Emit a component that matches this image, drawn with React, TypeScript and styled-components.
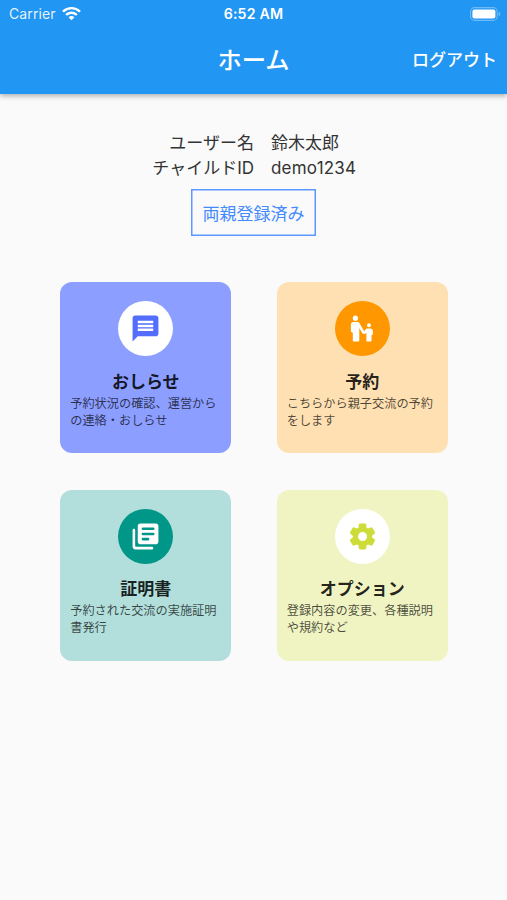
import React from "react";
import styled, { createGlobalStyle } from "styled-components";
import { MdMessage } from "react-icons/md";

const GlobalStyle = createGlobalStyle`
  * { box-sizing: border-box; }
  body {
    margin: 0;
    background: #fafafa;
    color: #333;
    font-family: Inter, "Noto Sans CJK JP", sans-serif;
  }
`;

const Screen = styled.div`
  min-height: 900px;
  display: flex;
  flex-direction: column;
`;

const Header = styled.header`
  height: 94px;
  background: #2196f3;
  color: #fff;
  box-shadow: 0 2px 5px rgba(0, 0, 0, 0.3);
`;

const StatusBar = styled.div`
  height: 27px;
  padding: 0 6px 0 9px;
  display: grid;
  grid-template-columns: 1fr auto 1fr;
  align-items: center;
`;

const Carrier = styled.div`
  display: flex;
  align-items: center;
  gap: 6px;
  font-size: 14px;
  line-height: 27px;
  letter-spacing: 0.1px;
  color: rgba(255, 255, 255, 0.9);
`;

const Clock = styled.div`
  margin-left: -3px;
  font-size: 14.2px;
  font-weight: 600;
  line-height: 27px;
  letter-spacing: 0.2px;
`;

const Battery = styled.svg`
  justify-self: end;
`;

const AppBar = styled.div`
  height: 65px;
  padding: 0 10px 0 10px;
  display: grid;
  grid-template-columns: 1fr auto 1fr;
  align-items: center;
`;

const Title = styled.h1`
  grid-column: 2;
  margin: 0;
  font-size: 24.3px;
  font-weight: 500;
  line-height: 36px;
`;

const Logout = styled.button`
  justify-self: end;
  padding: 0;
  border: 0;
  background: none;
  color: inherit;
  font: inherit;
  font-size: 17px;
  font-weight: 500;
  line-height: 26px;
`;

const Account = styled.section`
  padding-top: 37px;
  display: flex;
  flex-direction: column;
  align-items: center;
`;

const AccountTable = styled.dl`
  margin: 0;
  width: 100%;
  display: grid;
  grid-template-columns: 1fr 1fr;
  column-gap: 17px;
  padding-left: 18px;
  font-size: 17px;
  line-height: 24.5px;
`;

const Label = styled.dt`
  text-align: right;
`;

const Value = styled.dd<{ $tracking?: number }>`
  margin: 0;
  letter-spacing: ${(p) => p.$tracking ?? 0}px;
`;

const ParentsBadge = styled.div`
  margin-top: 9px;
  width: 125px;
  height: 47px;
  padding-bottom: 1px;
  display: flex;
  align-items: center;
  justify-content: center;
  box-shadow: inset 0 0 0 1.5px #5c98ff;
  color: #448aff;
  font-size: 17px;
  white-space: nowrap;
`;

const Menu = styled.main`
  margin: 46px auto 0;
  display: grid;
  grid-template-columns: 171px 171px;
  gap: 36.500px 45.500px;
  padding-left: 1px;
`;

const Card = styled.article<{ $tint: string }>`
  height: 171px;
  padding: 19px 10px 0;
  border-radius: 12px;
  background: ${(p) => p.$tint};
`;

const IconDisc = styled.div<{ $fill: string; $ink: string }>`
  width: 55px;
  height: 55px;
  margin: 0 auto;
  display: flex;
  align-items: center;
  justify-content: center;
  border-radius: 50%;
  background: ${(p) => p.$fill};
  color: ${(p) => p.$ink};
`;

const CardTitle = styled.h2`
  margin: 12.500px 0 0;
  text-align: center;
  color: rgba(0, 0, 0, 0.87);
  font-size: 17px;
  font-weight: 600;
  line-height: 26px;
`;

const CardText = styled.p`
  margin: 0 -6px 0 0;
  color: rgba(0, 0, 0, 0.7);
  font-size: 12.2px;
  line-height: 17px;
  white-space: pre-line;
`;

interface IconProps {
  size: number;
}

function ParentChildIcon({ size }: IconProps) {
  return (
    <svg width={size} height={size} viewBox="0 0 24 24" fill="currentColor">
      <circle cx="6.5" cy="4" r="2" />
      <circle cx="17" cy="9.5" r="1.5" />
      <path d="M5 7h3c.7 0 1.3.4 1.7 1l3.6 6.2.9-1.3c.4-.6 1-.9 1.6-.9H18c1.1 0 2 .9 2 2v2.2c0 .5-.4.8-1 .8v4.2c0 .4-.3.8-.8.8h-2.400c-.5 0-.8-.4-.8-.8V15l-.4.6c-.2.3-.4.4-.7.4h-1.300c-.3 0-.5-.1-.7-.4L9.500 11.700v9.500c0 .4-.4.8-.8.8H5.300c-.4 0-.8-.4-.8-.8V15H4c-.6 0-1-.4-1-1V9c0-1.100.9-2 2-2Z" />
    </svg>
  );
}

function LibraryIcon({ size }: IconProps) {
  return (
    <svg width={size} height={size} viewBox="0 0 24 24" fill="currentColor">
      <path d="M3 6c-.55 0-1 .45-1 1v13c0 1.100.9 2 2 2h13c.55 0 1-.45 1-1s-.45-1-1-1H5c-.55 0-1-.45-1-1V7c0-.55-.45-1-1-1Z" />
      <path
        fillRule="evenodd"
        d="M20 2H8c-1.100 0-2 .9-2 2v12c0 1.100.9 2 2 2h12c1.100 0 2-.9 2-2V4c0-1.100-.9-2-2-2ZM10 5h8a1 1 0 0 1 0 2h-8a1 1 0 0 1 0-2Zm0 4h8a1 1 0 0 1 0 2h-8a1 1 0 0 1 0-2Zm0 4h4a1 1 0 0 1 0 2h-4a1 1 0 0 1 0-2Z"
      />
    </svg>
  );
}

function GearIcon({ size }: IconProps) {
  return (
    <svg width={size} height={size} viewBox="0 0 24 24" fill="currentColor">
      <path d="M19.5 12c0-.23-.01-.45-.03-.68l1.86-1.41c.4-.3.51-.86.26-1.3l-1.87-3.23c-.25-.44-.79-.62-1.25-.42l-2.15.91c-.37-.26-.76-.49-1.17-.68l-.29-2.31c-.06-.5-.49-.88-.99-.88h-3.73c-.51 0-.94.38-1 .88l-.29 2.31c-.41.19-.8.42-1.17.68l-2.15-.91c-.46-.2-1-.02-1.25.42L2.410 8.620c-.25.44-.14.99.26 1.3l1.860 1.410c-.02.22-.03.44-.03.67s.01.45.03.68l-1.860 1.410c-.4.3-.51.86-.26 1.3l1.870 3.230c.25.44.79.62 1.250.42l2.150-.91c.37.26.76.49 1.170.68l.29 2.310c.06.5.49.88.99.88h3.730c.5 0 .93-.38.99-.88l.29-2.310c.41-.19.8-.42 1.170-.68l2.150.91c.46.2 1 .02 1.250-.42l1.870-3.230c.25-.44.14-.99-.26-1.3l-1.860-1.410c.03-.23.04-.45.04-.68Zm-7.460 3.5c-1.930 0-3.500-1.570-3.500-3.500s1.570-3.500 3.500-3.500 3.500 1.570 3.500 3.500-1.570 3.500-3.500 3.500Z" />
    </svg>
  );
}

interface MenuItem {
  title: string;
  text: string;
  tint: string;
  fill: string;
  ink: string;
  icon: React.ComponentType<IconProps>;
}

const items: MenuItem[] = [
  { title: "おしらせ", text: "予約状況の確認、運営から\nの連絡・おしらせ", tint: "#8c9eff", fill: "#ffffff", ink: "#536dfe", icon: MdMessage },
  { title: "予約", text: "こちらから親子交流の予約\nをします", tint: "#ffe0b2", fill: "#ff9800", ink: "#ffffff", icon: ParentChildIcon },
  { title: "証明書", text: "予約された交流の実施証明\n書発行", tint: "#b2dfdb", fill: "#009688", ink: "#ffffff", icon: LibraryIcon },
  { title: "オプション", text: "登録内容の変更、各種説明\nや規約など", tint: "#f0f4c3", fill: "#ffffff", ink: "#cddc39", icon: GearIcon },
];

function WifiIcon() {
  return (
    <svg width="19" height="14" viewBox="0 0 19 14" fill="#fff">
      <path d="M9.5 0C6 0 2.8 1.4.5 3.6a.4.4 0 0 0 0 .6l1.1 1.1c.2.2.4.2.6 0a10.500 10.500 0 0 1 14.600 0c.2.2.4.2.6 0l1.100-1.100a.4.4 0 0 0 0-.6A13 13 0 0 0 9.500 0Z" />
      <path d="M9.500 4.600c-2.300 0-4.300.9-5.900 2.300a.4.4 0 0 0 0 .6l1.100 1.100c.2.200.4.200.6 0a6.200 6.200 0 0 1 8.400 0c.2.200.4.200.6 0l1.100-1.100a.4.4 0 0 0 0-.6 8.700 8.700 0 0 0-5.900-2.300Z" />
      <path d="M9.500 9c-1.100 0-2 .4-2.700 1a.4.4 0 0 0 0 .6l2.400 2.500c.2.200.4.200.6 0l2.400-2.500a.4.4 0 0 0 0-.6c-.7-.6-1.600-1-2.700-1Z" />
    </svg>
  );
}

function BatteryIcon() {
  return (
    <Battery width="31" height="14" viewBox="0 0 31 14" fill="none">
      <rect x="0.6" y="0.6" width="26.6" height="12.800" rx="4" stroke="#fff" strokeOpacity="0.35" strokeWidth="1.100" />
      <rect x="2.400" y="2.400" width="23" height="9.200" rx="2" fill="#fff" />
      <path d="M28.700 4.900v4.200c1-.4 1.600-1.200 1.600-2.100s-.6-1.700-1.600-2.100Z" fill="#fff" fillOpacity="0.400" />
    </Battery>
  );
}

export default function App() {
  return (
    <Screen>
      <GlobalStyle />
      <Header>
        <StatusBar>
          <Carrier>
            Carrier
            <WifiIcon />
          </Carrier>
          <Clock>6:52 AM</Clock>
          <BatteryIcon />
        </StatusBar>
        <AppBar>
          <Title>ホーム</Title>
          <Logout>ログアウト</Logout>
        </AppBar>
      </Header>
      <Account>
        <AccountTable>
          <Label>ユーザー名</Label>
          <Value>鈴木太郎</Value>
          <Label>チャイルドID</Label>
          <Value $tracking={0.2}>demo1234</Value>
        </AccountTable>
        <ParentsBadge>両親登録済み</ParentsBadge>
      </Account>
      <Menu>
        {items.map(({ title, text, tint, fill, ink, icon: Icon }) => (
          <Card key={title} $tint={tint}>
            <IconDisc $fill={fill} $ink={ink}>
              <Icon size={31} />
            </IconDisc>
            <CardTitle>{title}</CardTitle>
            <CardText>{text}</CardText>
          </Card>
        ))}
      </Menu>
    </Screen>
  );
}
